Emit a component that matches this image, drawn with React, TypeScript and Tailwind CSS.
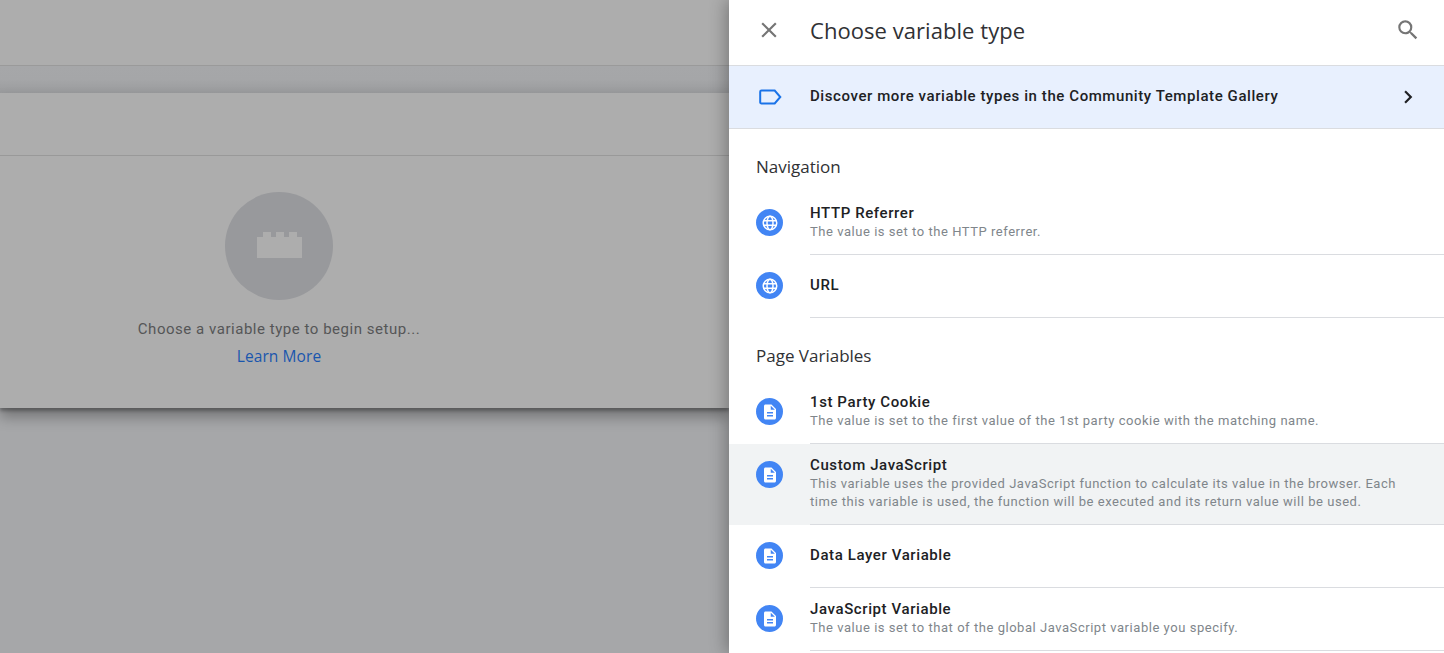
import React from "react";

const G = { fontFamily: '"Open Sans", "Noto Sans", sans-serif' };
const R = { fontFamily: 'Roboto, "Liberation Sans", sans-serif' };

function Globe() {
  return (
    <svg width="18" height="18" viewBox="0 0 24 24" fill="none" stroke="#fff" strokeWidth="2">
      <circle cx="12" cy="12" r="9" />
      <ellipse cx="12" cy="12" rx="4" ry="9" />
      <path d="M3.500 9h17M3.500 15h17" />
    </svg>
  );
}

function Doc() {
  return (
    <svg width="18" height="18" viewBox="0 0 24 24" fill="#fff">
      <path d="M14 2H6c-1.100 0-2 .9-2 2v16c0 1.100.9 2 2 2h12c1.100 0 2-.9 2-2V8l-6-6zm2 16H8v-2h8v2zm0-4H8v-2h8v2zm-3-5V3.500L18.500 9H13z" />
    </svg>
  );
}

function Row({ icon, title, sub, active, center }: { icon: React.ReactNode; title: string; sub?: React.ReactNode; active?: boolean; center?: boolean }) {
  return (
    <div className={`flex shrink-0 pl-[27px] ${active ? "bg-[#f1f3f4]" : ""}`}>
      <div className="mt-[17px] mr-[27px] flex h-[27px] w-[27px] shrink-0 items-center justify-center rounded-full bg-[#4285f4]">{icon}</div>
      <div className={`flex min-h-[63px] flex-1 flex-col border-b border-[#dadce0] pr-[44px] ${center ? "justify-center pb-[2px]" : "pt-[11px] pb-[13px]"}`}>
        <div className="text-[15px] leading-[20px] font-medium tracking-[0.6px] text-[#202124]" style={R}>{title}</div>
        {sub && <div className="text-[13px] leading-[18px] tracking-[0.54px] text-[#80868b]" style={R}>{sub}</div>}
      </div>
    </div>
  );
}

function Heading({ children }: { children: React.ReactNode }) {
  return <div className="flex h-[63px] shrink-0 items-center pl-[27px] pt-[13px] text-[17px] text-[#303134]" style={G}>{children}</div>;
}

export default function App() {
  return (
    <div className="flex h-[653px] w-[1444px] overflow-hidden bg-[#a6a7a9]">
      <div className="flex w-[729px] shrink-0 flex-col">
        <div className="h-[66px] border-b border-[#9a9a9a] bg-[#adadad]" />
        <div className="h-[27px] bg-gradient-to-b from-[#a6a7a9] via-[#a5a6a8] to-[#9a9b9d]" />
        <div className="z-10 h-[315px] bg-[#adadad] shadow-[0_3px_3px_rgba(0,0,0,0.25),0_9px_13px_rgba(0,0,0,0.3)]">
          <div className="h-[63px] border-b border-[#999999]" />
          <div className="flex w-[558px] flex-col items-center pt-[36px]">
            <div className="flex h-[108px] w-[108px] items-center justify-center rounded-full bg-[#98999c]">
              <svg className="mb-[2px]" width="45" height="26" viewBox="0 0 45 26" fill="#adadad">
                <path d="M0 5h6V0h8v5h5V0h8v5h5V0h8v5h5v21H0z" />
              </svg>
            </div>
            <div className="mt-[19px] text-[15px] leading-[20px] tracking-[0.53px] text-[#555657]" style={R}>Choose a variable type to begin setup...</div>
            <div className="mt-[7px] text-[15.5px] leading-[20px] tracking-[0.1px] text-[#1a56ad]" style={G}>Learn More</div>
          </div>
        </div>
      </div>
      <div className="z-20 flex h-[653px] flex-1 flex-col overflow-hidden bg-white shadow-[-3px_0_16px_rgba(0,0,0,0.3)]">
        <div className="flex h-[65px] shrink-0 items-center pr-[23px] pb-[6px] pl-[27px]">
          <svg className="mr-[28px]" width="26" height="26" viewBox="0 0 24 24" fill="#757575">
            <path d="M19 6.410 17.590 5 12 10.590 6.410 5 5 6.410 10.590 12 5 17.590 6.410 19 12 13.410 17.590 19 19 17.590 13.410 12z" />
          </svg>
          <div className="mt-[2px] flex-1 text-[22px] tracking-[0.05px] text-[#303134]" style={G}>Choose variable type</div>
          <svg width="26" height="26" viewBox="0 0 24 24" fill="#757575">
            <path d="M15.500 14h-.79l-.28-.27A6.470 6.470 0 0 0 16 9.500 6.500 6.500 0 1 0 9.500 16c1.610 0 3.090-.59 4.230-1.570l.27.28v.79l5 4.990L20.490 19l-4.990-5zm-6 0C7.010 14 5 11.990 5 9.500S7.010 5 9.500 5 14 7.010 14 9.500 11.990 14 9.500 14z" />
          </svg>
        </div>
        <div className="flex h-[64px] shrink-0 items-center border-y border-[#dadce0] bg-[#e8f0fe] pr-[23px] pl-[30px]">
          <svg className="mr-[28px]" width="23" height="16" viewBox="0 0 23 16" fill="none" stroke="#1a73e8" strokeWidth="2">
            <path d="M2.500 1.500h13.200l5.600 6.500-5.600 6.500H2.500a1.300 1.300 0 0 1-1.300-1.300V2.800a1.300 1.300 0 0 1 1.300-1.300z" />
          </svg>
          <div className="mb-[2px] flex-1 text-[15px] font-medium tracking-[0.58px] text-[#202124]" style={R}>Discover more variable types in the Community Template Gallery</div>
          <svg width="26" height="26" viewBox="0 0 24 24" fill="#202124">
            <path d="M10 6 8.590 7.410 13.170 12l-4.580 4.590L10 18l6-6z" />
          </svg>
        </div>
        <Heading>Navigation</Heading>
        <Row icon={<Globe />} title="HTTP Referrer" sub="The value is set to the HTTP referrer." />
        <Row icon={<Globe />} title="URL" center />
        <Heading>Page Variables</Heading>
        <Row icon={<Doc />} title="1st Party Cookie" sub="The value is set to the first value of the 1st party cookie with the matching name." />
        <Row icon={<Doc />} active title="Custom JavaScript" sub="This variable uses the provided JavaScript function to calculate its value in the browser. Each time this variable is used, the function will be executed and its return value will be used." />
        <Row icon={<Doc />} title="Data Layer Variable" center />
        <Row icon={<Doc />} title="JavaScript Variable" sub="The value is set to that of the global JavaScript variable you specify." />
      </div>
    </div>
  );
}
